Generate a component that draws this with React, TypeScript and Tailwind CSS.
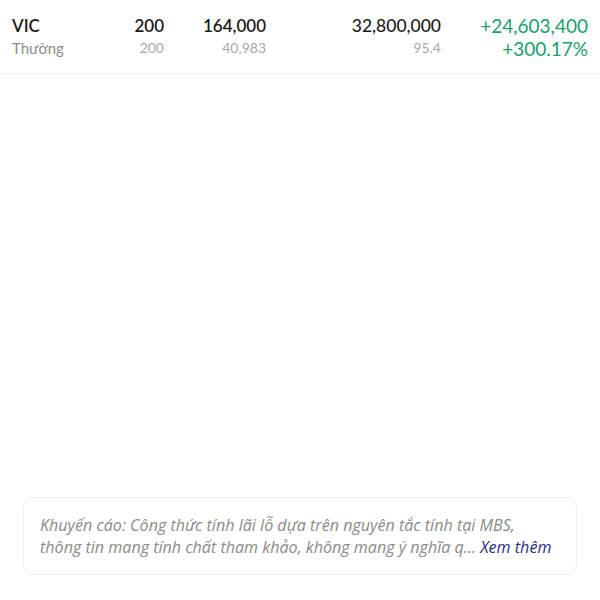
import React from "react";

export default function App() {
  return (
    <div
      className="min-h-screen w-full bg-white flex flex-col"
      style={{ fontFamily: "Lato, 'Noto Sans', sans-serif" }}
    >
      <div className="border-b border-[#f0f0f0] px-3 pt-[14px] pb-[13px]">
        <div className="grid grid-cols-[100px_52px_102px_175px_147px]">
          <div className="flex flex-col">
            <span className="text-[17px] leading-[23px] font-semibold text-[#1c1c1c]">VIC</span>
            <span className="text-[15px] leading-[22px] text-[#8c8c8c]">Thường</span>
          </div>
          <div className="flex flex-col items-end">
            <span className="text-[17px] leading-[23px] font-semibold text-[#1c1c1c]">200</span>
            <span className="text-[14px] leading-[22px] text-[#a8a8a8]">200</span>
          </div>
          <div className="flex flex-col items-end">
            <span className="text-[17px] leading-[23px] font-semibold text-[#1c1c1c]">164,000</span>
            <span className="text-[14px] leading-[22px] text-[#a8a8a8]">40,983</span>
          </div>
          <div className="flex flex-col items-end">
            <span className="text-[17.5px] leading-[23px] font-medium text-[#1c1c1c]">32,800,000</span>
            <span className="text-[14px] leading-[22px] text-[#a8a8a8]">95.4</span>
          </div>
          <div className="flex flex-col items-end">
            <span className="text-[19px] leading-[23px] text-[#1a9e6e]">+24,603,400</span>
            <span className="text-[19px] leading-[23px] text-[#1a9e6e]">+300.17%</span>
          </div>
        </div>
      </div>
      <div className="flex-1" />
      <div className="mx-[23px] mb-[25px] rounded-[10px] border border-[#eeeeee] px-4 py-[16px]">
        <p
          className="text-[16.1px] leading-[22px] italic text-[#8a8a8a]"
          style={{ fontFamily: "'Open Sans', 'Noto Sans', sans-serif" }}
        >
          Khuyến cáo: Công thức tính lãi lỗ dựa trên nguyên tắc tính tại MBS,
          <br />
          thông tin mang tính chất tham khảo, không mang ý nghĩa q...{" "}
          <span className="text-[#23307f]">Xem thêm</span>
        </p>
      </div>
    </div>
  );
}
